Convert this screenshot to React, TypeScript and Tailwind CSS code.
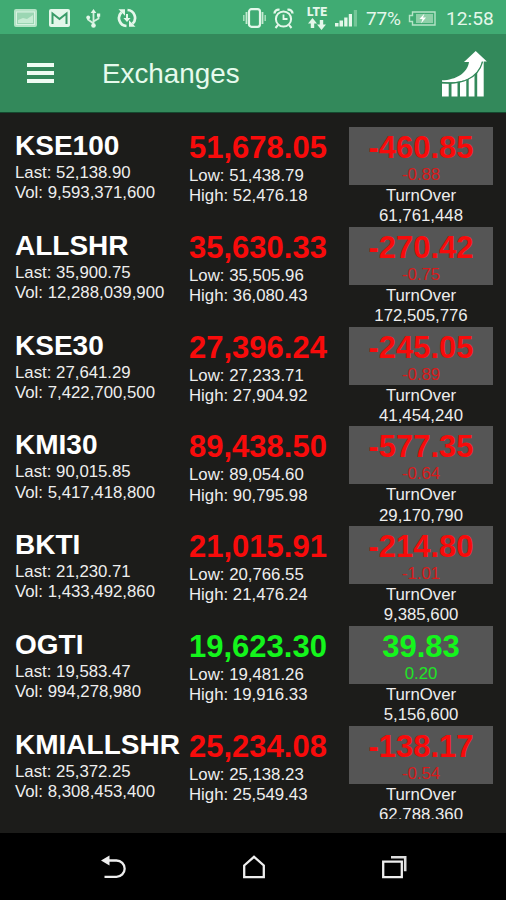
type Exchange = {
  name: string;
  price: string;
  change: string;
  percent: string;
  last: string;
  vol: string;
  low: string;
  high: string;
  turnover: string;
};

const exchanges: Exchange[] = [
  { name: "KSE100", price: "51,678.05", change: "-460.85", percent: "-0.88", last: "52,138.90", vol: "9,593,371,600", low: "51,438.79", high: "52,476.18", turnover: "61,761,448" },
  { name: "ALLSHR", price: "35,630.33", change: "-270.42", percent: "-0.75", last: "35,900.75", vol: "12,288,039,900", low: "35,505.96", high: "36,080.43", turnover: "172,505,776" },
  { name: "KSE30", price: "27,396.24", change: "-245.05", percent: "-0.89", last: "27,641.29", vol: "7,422,700,500", low: "27,233.71", high: "27,904.92", turnover: "41,454,240" },
  { name: "KMI30", price: "89,438.50", change: "-577.35", percent: "-0.64", last: "90,015.85", vol: "5,417,418,800", low: "89,054.60", high: "90,795.98", turnover: "29,170,790" },
  { name: "BKTI", price: "21,015.91", change: "-214.80", percent: "-1.01", last: "21,230.71", vol: "1,433,492,860", low: "20,766.55", high: "21,476.24", turnover: "9,385,600" },
  { name: "OGTI", price: "19,623.30", change: "39.83", percent: "0.20", last: "19,583.47", vol: "994,278,980", low: "19,481.26", high: "19,916.33", turnover: "5,156,600" },
  { name: "KMIALLSHR", price: "25,234.08", change: "-138.17", percent: "-0.54", last: "25,372.25", vol: "8,308,453,400", low: "25,138.23", high: "25,549.43", turnover: "62,788,360" },
];

function StatusBar() {
  return (
    <div className="flex h-[34px] shrink-0 items-center bg-[#40ab73] pl-3.5 font-[Roboto,sans-serif] text-[19.2px] text-[#e4f7ea]">
      {/* picture */}
      <svg className="mt-0.5 shrink-0" width="23" height="18" viewBox="0 0 23 18">
        <rect width="23" height="18" rx="2" fill="#b4e3c6" />
        <rect x="2.5" y="3" width="18" height="12.5" fill="#9bd6b3" stroke="#d8f2e1" />
        <path d="M4 14v-3l5-2 4 1 6-4v8z" fill="#c6ebd3" />
      </svg>
      {/* mail */}
      <svg className="mt-0.5 ml-3 shrink-0" width="21" height="18" viewBox="0 0 21 18">
        <rect width="21" height="18" rx="2" fill="#e4f7ea" />
        <path d="M3.5 15V4.5l7 5.5 7-5.5V15" fill="none" stroke="#3a9c69" strokeWidth="2" />
      </svg>
      {/* usb */}
      <svg className="mt-0.5 ml-4 shrink-0" width="15" height="19" viewBox="0 0 15 19">
        <path d="M7.500 3v13M2 8v2.500l5.500 4M12.500 7v2.500l-5 3" fill="none" stroke="#d4f1de" strokeWidth="1.800" />
        <path d="M7.500 0l2.800 4h-5.600z" fill="#e4f7ea" />
        <circle cx="2.200" cy="8.500" r="1.900" fill="#e4f7ea" />
        <rect x="11" y="4.500" width="3.200" height="3.200" fill="#e4f7ea" />
        <circle cx="7.500" cy="16.500" r="2.300" fill="#e4f7ea" />
      </svg>
      {/* sync */}
      <svg className="mt-0.5 ml-4 shrink-0" width="20" height="20" viewBox="0 0 20 20">
        <path d="M9.500 18A8 8 0 0 1 4.500 4.200M10.500 2A8 8 0 0 1 15.500 15.800" fill="none" stroke="#e4f7ea" strokeWidth="2.700" />
        <path d="M1.500 1.200H8v6.500zM18.500 18.800H12v-6.500z" fill="#e4f7ea" />
        <path d="M9 6h2v4h2.600L10 14l-3.600-4H9z" fill="#e4f7ea" />
      </svg>
      {/* vibrate */}
      <svg className="mt-0.5 ml-[106px] shrink-0" width="23" height="20" viewBox="0 0 23 20">
        <rect x="6" y="1.200" width="11" height="17.600" rx="2.500" fill="none" stroke="#e4f7ea" strokeWidth="2.200" />
        <path d="M3.500 4v12M19.500 4v12" stroke="#c5ebd2" strokeWidth="1.800" />
        <path d="M.8 7v6M22.200 7v6" stroke="#a9dfbe" strokeWidth="1.500" />
      </svg>
      {/* alarm */}
      <svg className="mt-0.5 ml-[7px] shrink-0" width="21" height="21" viewBox="0 0 21 21">
        <circle cx="10.500" cy="11" r="7.600" fill="none" stroke="#e4f7ea" strokeWidth="2" />
        <path d="M10.500 6.500V11h4" fill="none" stroke="#e4f7ea" strokeWidth="1.800" />
        <path d="M1.500 5.500C1.500 3 4 1 6.500 1.800M19.500 5.500C19.500 3 17 1 14.500 1.800" fill="none" stroke="#e4f7ea" strokeWidth="2.400" />
        <path d="M5 17l-2.500 3M16 17l2.500 3" stroke="#e4f7ea" strokeWidth="2" />
      </svg>
      <div className="ml-3 flex w-[22px] shrink-0 flex-col items-center pt-px">
        <span className="text-[12px] leading-[12px] font-black tracking-[0.2px]">LTE</span>
        <svg width="18" height="12" viewBox="0 0 18 12">
          <path d="M4.500 0L9 5.500H6.200V10H2.800V5.500H0zM13.500 12L9 6.500h2.800V2h3.400v4.500H18z" fill="#e4f7ea" />
        </svg>
      </div>
      {/* signal */}
      <svg className="mt-0.5 ml-[7px] shrink-0" width="23" height="18" viewBox="0 0 23 18">
        <path d="M0 14h3.500v3.500H0zM4.500 11.500H8v6H4.500zM9.200 8.500h3.300v9H9.200zM13.800 5H17v12.500h-3.200z" fill="#e4f7ea" />
        <path d="M18.800 1H22v16.500h-3.200z" fill="#74c698" />
      </svg>
      <span className="mt-1 ml-2 w-[42px] shrink-0 text-[19px] tracking-[-0.2px]">77%</span>
      {/* battery */}
      <svg className="mt-0.5 shrink-0" width="28" height="15" viewBox="0 0 28 15">
        <path d="M7 1h20v13H4.500V10.500H1.500v-6h3V1z" fill="none" stroke="#b5e4c7" strokeWidth="1.400" />
        <path d="M8 3h17v9H8z" fill="#8fd0a9" />
        <path d="M16.500 2.500l-5 5.500h3l-1.500 4.500 5-6h-3z" fill="#fff" />
      </svg>
      <span className="mt-1 ml-2.5 shrink-0">12:58</span>
    </div>
  );
}

function AppBar() {
  return (
    <div className="flex h-[79px] shrink-0 items-center border-b border-[#14492f] bg-[#33895b] pr-[18px] pl-[27px] text-white">
      <div className="flex w-[27px] flex-col gap-1">
        <div className="h-1 bg-[#effcf3]" />
        <div className="h-1 bg-[#effcf3]" />
        <div className="h-1 bg-[#effcf3]" />
      </div>
      <h1 className="mt-0.5 ml-12 text-[27.8px] leading-8 text-[#e6faec]">Exchanges</h1>
      <svg className="mt-[3px] ml-auto" width="46" height="47" viewBox="0 0 46 47">
        <path d="M0 32.500h6.700v13H0zM9.500 32.500l6-.8v13.800h-6zM18 31.200q3.500-1 6.300-2.700v17H18zM26.700 27q3.500-2.500 5.800-5.500v24h-5.800zM35.200 18q4-3.500 6.500-9v36.500h-6.500z" fill="#fff" />
        <path d="M0 29.300C14 29 25.500 22 27 11h-5L33.700 0l11.200 10.600h-5C38 23 25 34 0 30.800z" fill="#fff" />
        <path d="M0 31.600C20 34 36 27 40.500 11" fill="none" stroke="#33895b" strokeWidth="1.200" />
      </svg>
    </div>
  );
}

function ExchangeRow({ item }: { item: Exchange }) {
  const color = item.change.startsWith("-") ? "text-[#f80b0b]" : "text-[#14f51c]";
  const percentColor = item.change.startsWith("-") ? "text-[#d81a1a]" : "text-[#1fe526]";
  return (
    <div className="flex h-[99.8px] shrink-0 text-[16.8px] leading-[20.2px] whitespace-nowrap text-[#eeeeee]">
      <div className="w-[174px] pt-[3px]">
        <h2 className="mb-px text-[28px] leading-8 font-bold text-white">{item.name}</h2>
        <p>Last: {item.last}</p>
        <p>Vol: {item.vol}</p>
      </div>
      <div className="w-40 pt-[3px]">
        <p className={`text-[31px] leading-9 font-bold ${color}`}>{item.price}</p>
        <p>Low: {item.low}</p>
        <p>High: {item.high}</p>
      </div>
      <div className="w-36 text-center">
        <div className="mb-px h-[58px] bg-[#555555] pt-[3px]">
          <p className={`text-[31px] leading-9 font-bold ${color}`}>{item.change}</p>
          <p className={`leading-[18px] ${percentColor}`}>{item.percent}</p>
        </div>
        <p>TurnOver</p>
        <p>{item.turnover}</p>
      </div>
    </div>
  );
}

function NavBar() {
  return (
    <div className="flex h-[67px] shrink-0 items-center bg-black pl-[101px]">
      <svg width="26" height="24" viewBox="0 0 26 24">
        <path d="M7 5.500h8.500a7.700 7.700 0 0 1 0 16.300H3.500" fill="none" stroke="#eee" strokeWidth="2.300" />
        <path d="M0 5.500l8.500-5v10z" fill="#eee" />
      </svg>
      <svg className="ml-[115px]" width="24" height="24" viewBox="0 0 24 24">
        <path d="M2.200 10.500L12 1.800l9.800 8.700v11.700H2.200z" fill="none" stroke="#eee" strokeWidth="2.300" />
      </svg>
      <svg className="ml-[116px]" width="25" height="24" viewBox="0 0 25 24">
        <path d="M1.200 6.700h18.600v15.500H1.200z" fill="none" stroke="#eee" strokeWidth="2.300" />
        <path d="M9 2.200h14.200v14" fill="none" stroke="#ddd" strokeWidth="2.600" />
      </svg>
    </div>
  );
}

export default function App() {
  return (
    <div className="flex h-[900px] w-[506px] flex-col overflow-hidden bg-[#1c1c1a] font-['Liberation_Sans',Arial,sans-serif]">
      <StatusBar />
      <AppBar />
      <div className="mb-3.5 flex min-h-0 flex-1 flex-col overflow-hidden pt-3.5 pl-[15px]">
        {exchanges.map((item) => (
          <ExchangeRow key={item.name} item={item} />
        ))}
      </div>
      <NavBar />
    </div>
  );
}
